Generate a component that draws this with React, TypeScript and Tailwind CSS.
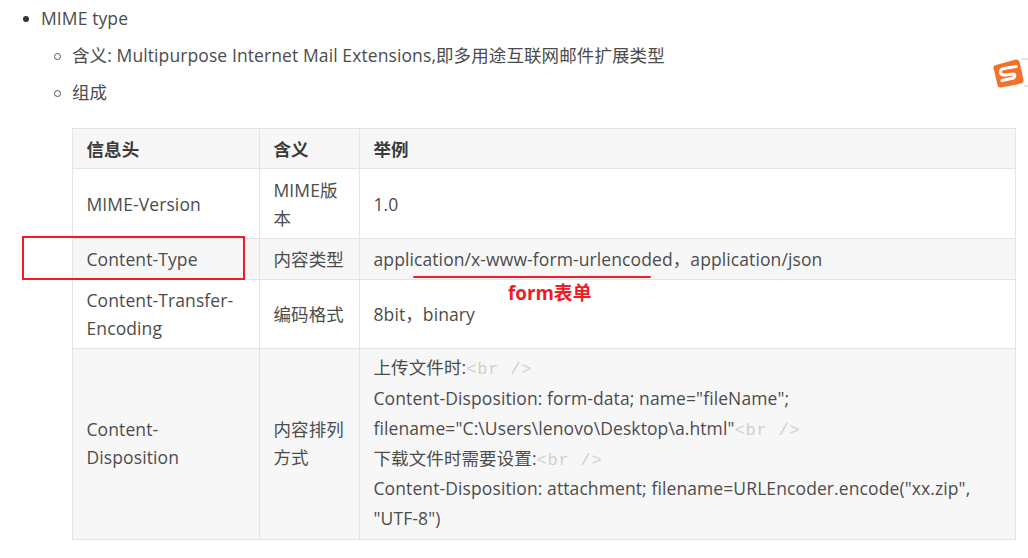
const font = { fontFamily: '"Open Sans", "Noto Sans CJK SC", sans-serif' };

const Br = () => <span className="font-['Liberation_Mono','DejaVu_Sans_Mono',monospace] text-[17px] leading-none tracking-[0.8px] text-[#d0d0d0]">{'<br />'}</span>;

const cell = 'border border-[#e4e4e4] pl-[13.5px] pr-[14px] py-[6px] align-middle leading-[28px]';
const headCell = cell + ' !py-[4px]';
const tallCell = cell + ' !pt-[2px] !pb-[4px]';

export default function App() {
  return (
    <div className="relative h-[558px] w-[1028px] overflow-hidden bg-white text-[17.5px] tracking-[0.1px] text-[#4c4c4c]" style={font}>
      <ul className="list-none pl-[41px] pt-[4px]">
        <li className="relative h-[28px] leading-[28px]">
          <span className="absolute left-[-18px] top-[12px] size-[6px] rounded-full bg-[#333]" />
          MIME type
        </li>
        <li className="mt-[9px]">
          <ul className="list-none pl-[31px]">
            <li className="relative h-[28px] leading-[28px]">
              <span className="absolute left-[-18px] top-[12px] size-[7px] rounded-full border border-[#555]" />
              含义: Multipurpose Internet Mail Extensions,即多用途互联网邮件扩展类型
            </li>
            <li className="relative mt-[9px] h-[28px] leading-[28px]">
              <span className="absolute left-[-18px] top-[12px] size-[7px] rounded-full border border-[#555]" />
              组成
            </li>
          </ul>
        </li>
      </ul>

      <table className="ml-[72px] mt-[22px] w-[944px] table-fixed border-collapse">
        <colgroup>
          <col className="w-[187px]" />
          <col className="w-[100px]" />
          <col />
        </colgroup>
        <tbody>
          <tr className="h-[40px] bg-[#f7f7f8] font-bold text-[#3a3a3a]">
            <td className={headCell}>信息头</td>
            <td className={headCell}>含义</td>
            <td className={headCell}>举例</td>
          </tr>
          <tr className="h-[70px]">
            <td className={cell}>MIME-Version</td>
            <td className={cell}>MIME版本</td>
            <td className={cell}>1.0</td>
          </tr>
          <tr className="h-[41px] bg-[#f7f7f8]">
            <td className={cell}>Content-Type</td>
            <td className={cell}>内容类型</td>
            <td className={cell}>application/x-www-form-urlencoded，application/json</td>
          </tr>
          <tr className="h-[69px]">
            <td className={cell}>Content-Transfer-Encoding</td>
            <td className={cell}>编码格式</td>
            <td className={cell}>8bit，binary</td>
          </tr>
          <tr className="h-[191px] bg-[#f7f7f8]">
            <td className={tallCell}>Content-Disposition</td>
            <td className={tallCell}>内容排列方式</td>
            <td className={tallCell + ' !leading-[30.2px]'}>
              上传文件时:<Br /><br />
              Content-Disposition: form-data; name="fileName"; filename="C:\Users\lenovo\Desktop\a.html"<Br /><br />
              下载文件时需要设置:<Br /><br />
              Content-Disposition: attachment; filename=URLEncoder.encode("xx.zip", "UTF-8")
            </td>
          </tr>
        </tbody>
      </table>

      {/* red annotations pasted over the page */}
      <div className="absolute left-[22px] top-[236px] h-[44px] w-[223px] border-2 border-[#ee1c25]" />
      <div className="absolute left-[413px] top-[276px] h-[2px] w-[238px] rounded-full bg-[#ee1c25]" />
      <div className="absolute left-[508px] top-[280px] text-[18.8px] font-bold leading-[26px] tracking-normal text-[#ee1c25]">form表单</div>

      <svg className="absolute left-[992px] top-[56px]" width="36" height="34" viewBox="0 0 36 34">
        <path d="M4 9 L24 3.5 Q27 3 27.6 6 L31.5 24 Q32 27 29 27.6 L9 31.5 Q6 32 5.5 29 L1.5 12 Q1 9.5 4 9 Z" fill="#f4702a" />
        <path d="M24 10.5 L12 12.5 Q7.5 13.5 8.5 17 Q9.5 19.5 14 19 L21 18 Q23.5 18.5 22.5 20.5 Q21.5 22.5 19 22.5 L10 24.5" fill="none" stroke="#fff" strokeWidth="3.2" strokeLinecap="round" />
        <path d="M29 3 H36 M32 30 H36" stroke="#ccc" strokeWidth="1" />
      </svg>
    </div>
  );
}
